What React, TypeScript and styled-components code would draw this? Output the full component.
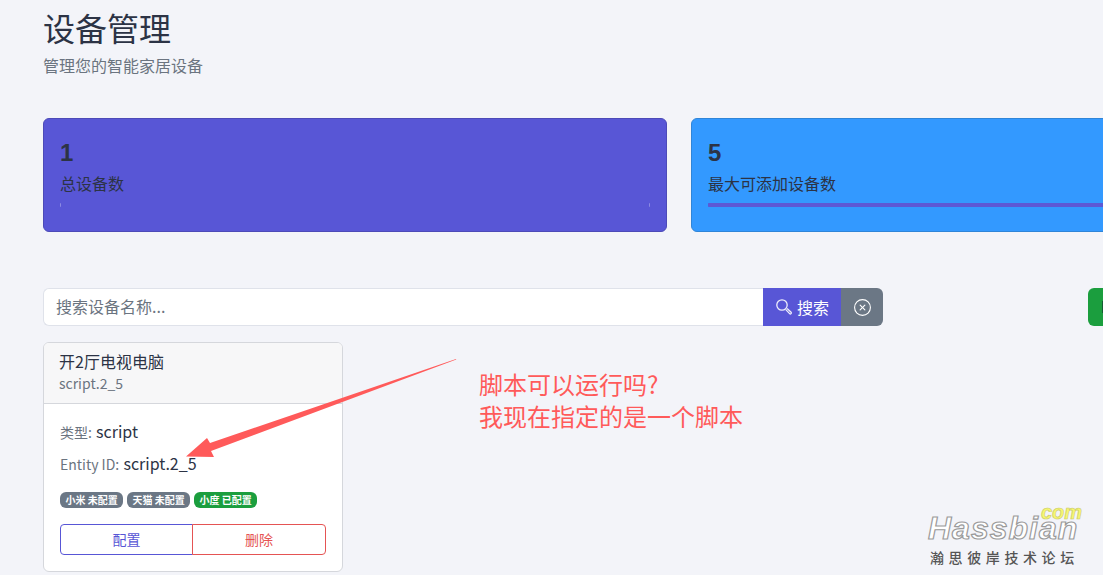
import React from "react";
import styled, { createGlobalStyle } from "styled-components";
import { XCircle } from "lucide-react";

const Global = createGlobalStyle`
  html, body { margin: 0; padding: 0; background: #f3f4f9; }
  body { font-family: "Noto Sans CJK SC", "Noto Sans", sans-serif; color: #2c3345; }
  * { box-sizing: border-box; }
`;

const Page = styled.div`
  position: relative;
  width: 1103px;
  height: 575px;
  overflow: hidden;
  padding: 8px 0 0 43px;
`;
const Title = styled.h1`
  margin: 0 0 7px;
  font-size: 32px;
  font-weight: 400;
  line-height: 38px;
  color: #2c3345;
`;
const Subtitle = styled.p`
  margin: 0 0 41px;
  font-size: 16px;
  line-height: 24px;
  color: #6b7480;
`;
const Stats = styled.div`
  display: flex;
  gap: 24px;
  width: 1272px;
  margin-bottom: 56px;
`;
const StatCard = styled.div<{ $bg: string; $border: string }>`
  flex: 0 0 624px;
  height: 114px;
  padding: 16px;
  background: ${(p) => p.$bg};
  border: 1px solid ${(p) => p.$border};
  border-radius: 6px;
`;
const StatValue = styled.div`
  font-family: "Liberation Sans", sans-serif;
  font-size: 24px;
  font-weight: 700;
  line-height: 36px;
  color: #2c3345;
`;
const StatLabel = styled.div`
  font-size: 16px;
  line-height: 24px;
  color: #2c3345;
`;
const Track = styled.div<{ $fill: string; $ends: string }>`
  height: 4px;
  margin-top: 8px;
  border-radius: 1px;
  background: ${(p) => p.$fill};
  border-left: 1px solid ${(p) => p.$ends};
  border-right: 1px solid ${(p) => p.$ends};
`;
const SearchRow = styled.div`
  display: flex;
  width: 1272px;
  margin-bottom: 16px;
`;
const SearchInput = styled.div`
  width: 720px;
  height: 38px;
  padding: 0 12px 2px;
  display: flex;
  align-items: center;
  background: #fff;
  border: 1px solid #dfe2ea;
  border-right: 0;
  border-radius: 6px 0 0 6px;
  font-size: 16px;
  color: #6b7480;
`;
const SearchButton = styled.div`
  width: 78px;
  height: 38px;
  display: flex;
  align-items: center;
  justify-content: center;
  gap: 4px;
  background: #5856d6;
  color: #fff;
  font-size: 16px;
`;
const ClearButton = styled.div`
  width: 42px;
  height: 38px;
  display: flex;
  align-items: center;
  justify-content: center;
  background: #6b7785;
  color: #fff;
  border-radius: 0 6px 6px 0;
`;
const AddButton = styled.div`
  margin-left: 205px;
  width: 120px;
  height: 38px;
  padding-left: 14px;
  display: flex;
  align-items: center;
  background: #1b9e3e;
  border-radius: 6px;
`;
const AddIconBlock = styled.span`
  display: block;
  width: 10px;
  height: 12px;
  background: #155c33;
`;
const Card = styled.div`
  width: 300px;
  height: 230px;
  background: #fff;
  border: 1px solid #d5d7dc;
  border-radius: 6px;
  overflow: hidden;
`;
const CardHeader = styled.div`
  height: 61px;
  padding: 6px 15px 0;
  background: #f7f7f8;
  border-bottom: 1px solid #d5d7dc;
`;
const CardTitle = styled.div`
  font-size: 16px;
  line-height: 24px;
  color: #2c3345;
`;
const CardSub = styled.div`
  font-size: 14px;
  line-height: 20px;
  color: #6b7480;
`;
const CardBody = styled.div`
  padding: 15px 16px 16px;
`;
const Line = styled.div`
  font-size: 14px;
  line-height: 24px;
  color: #6b7480;
  margin-bottom: 7px;
  b {
    font-weight: 400;
    font-size: 16px;
    margin-left: 1px;
    color: #2c3345;
  }
`;
const Badges = styled.div`
  display: flex;
  gap: 4px;
  margin-top: 16px;
`;
const Badge = styled.span<{ $bg: string }>`
  height: 16px;
  padding: 0 5.4px;
  display: flex;
  align-items: center;
  border-radius: 6px;
  background: ${(p) => p.$bg};
  color: #fff;
  font-size: 10px;
  font-weight: 700;
  line-height: 16px;
`;
const ButtonGroup = styled.div`
  display: flex;
  margin-top: 16px;
`;
const OutlineButton = styled.div<{ $color: string; $w: number; $side: "l" | "r" }>`
  width: ${(p) => p.$w}px;
  height: 31px;
  padding-bottom: 2px;
  display: flex;
  align-items: center;
  justify-content: center;
  font-size: 14px;
  color: ${(p) => p.$color};
  border: 1px solid ${(p) => p.$color};
  border-radius: ${(p) => (p.$side === "l" ? "4px 0 0 4px" : "0 4px 4px 0")};
  margin-left: ${(p) => (p.$side === "r" ? "-1px" : "0")};
`;
const Note = styled.div`
  position: absolute;
  left: 479px;
  top: 368px;
  font-size: 24px;
  line-height: 32px;
  color: #ff5a5a;
`;
const ArrowSvg = styled.svg`
  position: absolute;
  left: 0;
  top: 0;
`;
const Watermark = styled.div`
  position: absolute;
  left: 928px;
  top: 503px;
  width: 150px;
`;
const WmCom = styled.div`
  position: absolute;
  right: -4px;
  top: 3px;
  font-family: "Liberation Sans", sans-serif;
  font-size: 20px;
  font-style: italic;
  font-weight: 700;
  line-height: 12px;
  color: #f7f770;
  -webkit-text-stroke: 0.6px #c9c96a;
`;
const WmName = styled.div`
  font-family: "Liberation Sans", sans-serif;
  font-size: 32px;
  font-style: italic;
  font-weight: 700;
  line-height: 26px;
  letter-spacing: 1px;
  margin-top: 12px;
  color: #fff;
  -webkit-text-stroke: 1.2px #9a9a9a;
`;
const WmCn = styled.div`
  font-size: 14px;
  line-height: 20px;
  letter-spacing: 4.6px;
  margin: 6px 0 0 2px;
  white-space: nowrap;
  color: #555;
  font-weight: 500;
`;

const MagnifierIcon = () => (
  <svg width="18" height="18" viewBox="0 0 18 18" fill="none" stroke="currentColor" strokeWidth="1.3">
    <circle cx="7" cy="7" r="5.2" opacity="0.9" />
    <path d="M10.8 11.6 L14.6 15.6 A1 1 0 0 0 16.1 14.2 L12.1 10.5" opacity="0.9" />
  </svg>
);

export default function App() {
  return (
    <Page>
      <Global />
      <Title>设备管理</Title>
      <Subtitle>管理您的智能家居设备</Subtitle>
      <Stats>
        <StatCard $bg="#5856d6" $border="#4c4ab8">
          <StatValue>1</StatValue>
          <StatLabel>总设备数</StatLabel>
          <Track $fill="#5856d6" $ends="#8b8ae2" />
        </StatCard>
        <StatCard $bg="#3399ff" $border="#2f85d8">
          <StatValue>5</StatValue>
          <StatLabel>最大可添加设备数</StatLabel>
          <Track $fill="#5d58d5" $ends="#5d58d5" />
        </StatCard>
      </Stats>
      <SearchRow>
        <SearchInput>搜索设备名称...</SearchInput>
        <SearchButton>
          <MagnifierIcon />
          搜索
        </SearchButton>
        <ClearButton>
          <XCircle size={19} strokeWidth={1.4} />
        </ClearButton>
        <AddButton>
          <AddIconBlock />
        </AddButton>
      </SearchRow>
      <Card>
        <CardHeader>
          <CardTitle>开2厅电视电脑</CardTitle>
          <CardSub>script.2_5</CardSub>
        </CardHeader>
        <CardBody>
          <Line>
            类型: <b>script</b>
          </Line>
          <Line>
            Entity ID: <b>script.2_5</b>
          </Line>
          <Badges>
            <Badge $bg="#6b7785">小米 未配置</Badge>
            <Badge $bg="#6b7785">天猫 未配置</Badge>
            <Badge $bg="#1b9e3e">小度 已配置</Badge>
          </Badges>
          <ButtonGroup>
            <OutlineButton $side="l" $w={133} $color="#5856d6">配置</OutlineButton>
            <OutlineButton $side="r" $w={134} $color="#e55353">删除</OutlineButton>
          </ButtonGroup>
        </CardBody>
      </Card>
      <ArrowSvg width="1103" height="575" viewBox="0 0 1103 575">
        <path d="M456 359 L456.3 359.6 L211 451 L214 457 L186 456.5 L207 438 L210 443 Z" fill="#ff5a5a" />
      </ArrowSvg>
      <Note>
        脚本可以运行吗?
        <br />
        我现在指定的是一个脚本
      </Note>
      <Watermark>
        <WmCom>com</WmCom>
        <WmName>Hassbian</WmName>
        <WmCn>瀚思彼岸技术论坛</WmCn>
      </Watermark>
    </Page>
  );
}
